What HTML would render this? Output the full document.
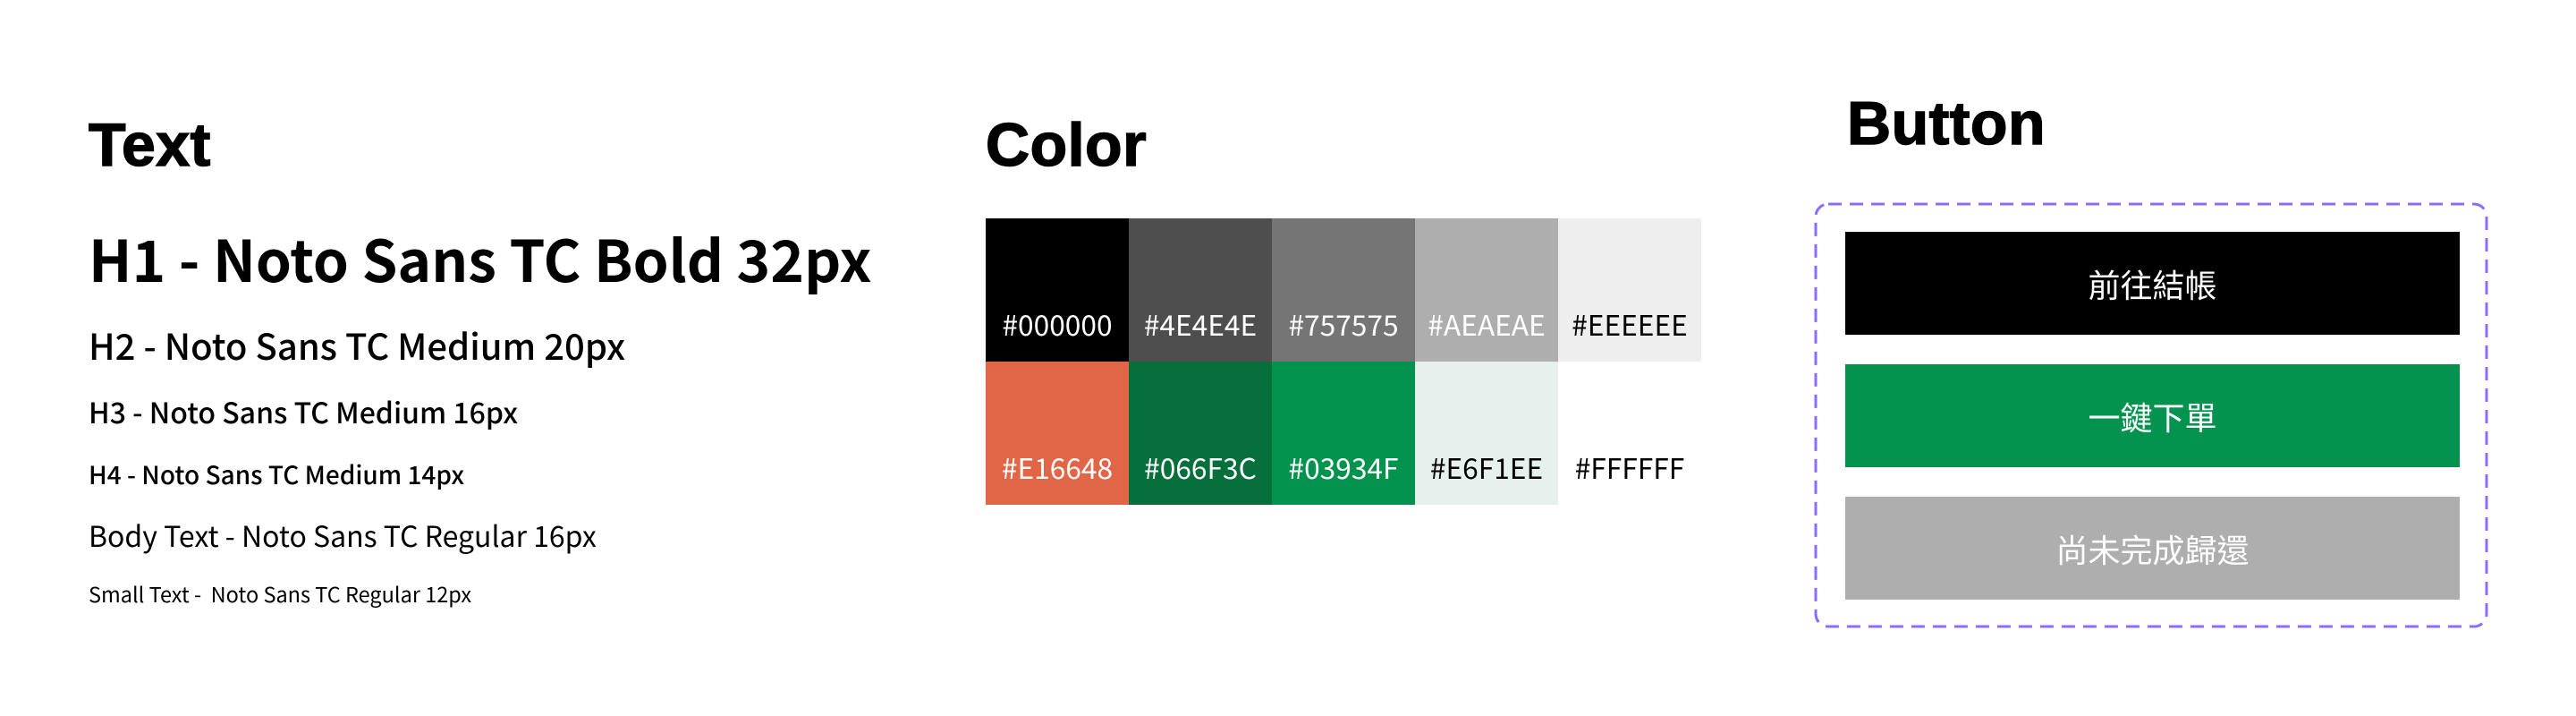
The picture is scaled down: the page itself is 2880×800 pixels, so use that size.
<!DOCTYPE html>
<html><head><meta charset="utf-8"><style>
html,body{margin:0;padding:0;background:#fff;width:2880px;height:800px;overflow:hidden;position:relative}
.t{position:absolute;white-space:nowrap;font-family:"Noto Sans CJK TC","Liberation Sans",sans-serif;color:#000}
.title{font-family:"Liberation Sans",sans-serif;font-weight:900;font-size:68px;line-height:68px;letter-spacing:0.5px;-webkit-text-stroke:1.5px #000}
.sw{position:absolute;width:160px;height:160px}
.sw span{position:absolute;left:0;right:0;top:103px;text-align:center;font-family:"Noto Sans CJK TC","Liberation Sans",sans-serif;font-size:31.7px;line-height:31.7px;color:#fff}
.btn{position:absolute;left:2063px;width:687px;height:115px;display:flex;align-items:center;justify-content:center;color:#fff;font-family:"Liberation Sans","Noto Sans CJK TC",sans-serif;font-size:36px}
</style></head><body>
<div class="t title" style="left:99px;top:128px">Text</div>
<div class="t" style="left:99px;top:256px;font-size:64px;line-height:64px;font-weight:700">H1 - Noto Sans TC Bold 32px</div>
<div class="t" style="left:99px;top:365px;font-size:40px;line-height:40px;font-weight:500">H2 - Noto Sans TC Medium 20px</div>
<div class="t" style="left:99px;top:444px;font-size:32px;line-height:32px;font-weight:500">H3 - Noto Sans TC Medium 16px</div>
<div class="t" style="left:99px;top:516px;font-size:28px;line-height:28px;font-weight:500">H4 - Noto Sans TC Medium 14px</div>
<div class="t" style="left:99px;top:582px;font-size:32px;line-height:32px">Body Text - Noto Sans TC Regular 16px</div>
<div class="t" style="left:99px;top:652px;font-size:23.5px;line-height:23.5px">Small Text -&nbsp; Noto Sans TC Regular 12px</div>

<div class="t title" style="left:1102px;top:128px">Color</div>
<div class="sw" style="left:1102px;top:244px;background:#000"><span>#000000</span></div>
<div class="sw" style="left:1262px;top:244px;background:#4E4E4E"><span>#4E4E4E</span></div>
<div class="sw" style="left:1422px;top:244px;background:#757575"><span>#757575</span></div>
<div class="sw" style="left:1582px;top:244px;background:#AEAEAE"><span>#AEAEAE</span></div>
<div class="sw" style="left:1742px;top:244px;background:#EEEEEE"><span style="color:#000">#EEEEEE</span></div>
<div class="sw" style="left:1102px;top:404px;background:#E16648"><span>#E16648</span></div>
<div class="sw" style="left:1262px;top:404px;background:#066F3C"><span>#066F3C</span></div>
<div class="sw" style="left:1422px;top:404px;background:#03934F"><span>#03934F</span></div>
<div class="sw" style="left:1582px;top:404px;background:#E6F1EE"><span style="color:#000">#E6F1EE</span></div>
<div class="sw" style="left:1742px;top:404px;background:#FFFFFF"><span style="color:#000">#FFFFFF</span></div>

<div class="t title" style="left:2065px;top:104px">Button</div>
<svg style="position:absolute;left:2028px;top:226px" width="756" height="478"><rect x="2" y="2" width="750" height="472" rx="14" fill="none" stroke="#8B6CFF" stroke-width="3" stroke-dasharray="15 9"/></svg>
<div class="btn" style="top:259px;background:#000">前往結帳</div>
<div class="btn" style="top:407px;background:#03934F">一鍵下單</div>
<div class="btn" style="top:555px;background:#AEAEAE">尚未完成歸還</div>
</body></html>
